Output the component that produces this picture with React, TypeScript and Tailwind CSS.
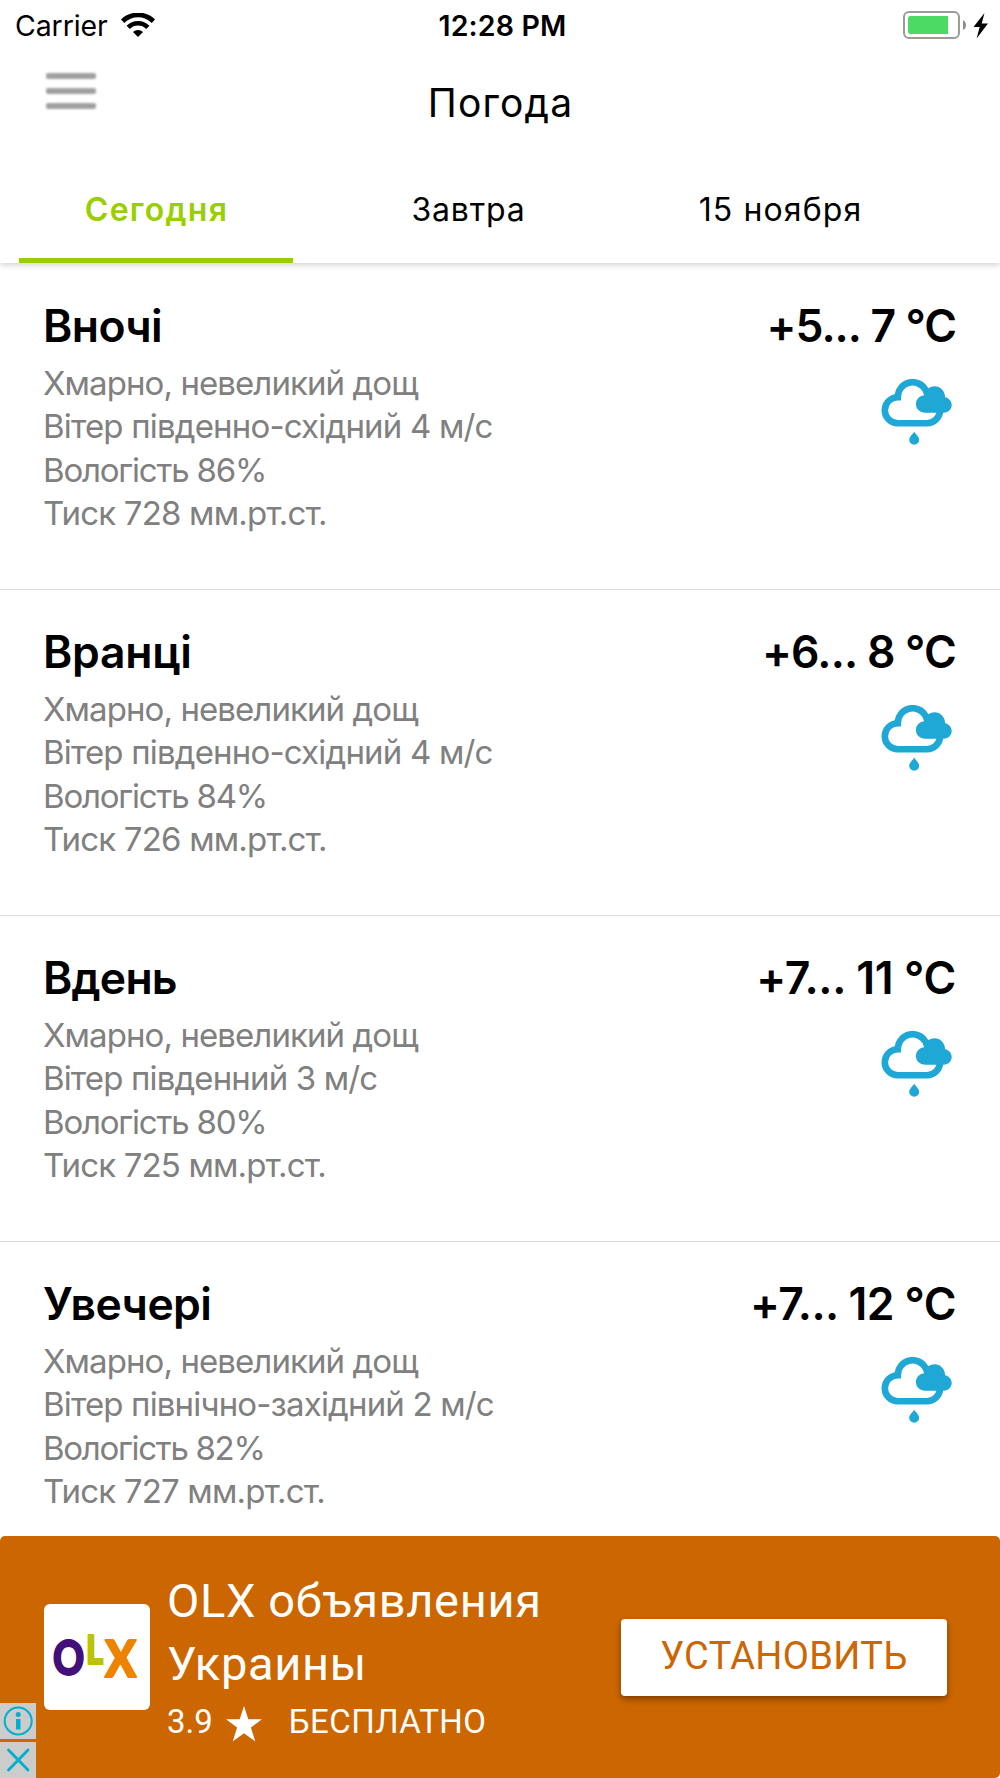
import clsx from 'clsx';

type Forecast = {
  title: string;
  temperature: string;
  tempClass: string;
  titleClass: string;
  lines: { text: string; className: string }[];
};

const tabs = [
  { label: 'Сегодня', active: true, className: 'font-semibold tracking-[1.3px]' },
  { label: 'Завтра', active: false, className: 'tracking-[0.85px]' },
  { label: '15 ноября', active: false, className: 'tracking-[1.1px]' },
];

const forecasts: Forecast[] = [
  {
    title: 'Вночі',
    titleClass: 'tracking-[-0.6px]',
    temperature: '+5... 7 °C',
    tempClass: 'tracking-[-0.95px]',
    lines: [
      { text: 'Хмарно, невеликий дощ', className: 'tracking-[-0.92px]' },
      { text: 'Вітер південно-східний 4 м/с', className: 'tracking-[-0.82px]' },
      { text: 'Вологість 86%', className: 'tracking-[-1.2px]' },
      { text: 'Тиск 728 мм.рт.ст.', className: 'tracking-[-0.82px]' },
    ],
  },
  {
    title: 'Вранці',
    titleClass: 'tracking-[-0.3px]',
    temperature: '+6... 8 °C',
    tempClass: 'tracking-[-0.8px]',
    lines: [
      { text: 'Хмарно, невеликий дощ', className: 'tracking-[-0.92px]' },
      { text: 'Вітер південно-східний 4 м/с', className: 'tracking-[-0.82px]' },
      { text: 'Вологість 84%', className: 'tracking-[-1.2px]' },
      { text: 'Тиск 726 мм.рт.ст.', className: 'tracking-[-0.82px]' },
    ],
  },
  {
    title: 'Вдень',
    titleClass: 'tracking-[-0.8px]',
    temperature: '+7... 11 °C',
    tempClass: 'tracking-[-0.3px]',
    lines: [
      { text: 'Хмарно, невеликий дощ', className: 'tracking-[-0.92px]' },
      { text: 'Вітер південний 3 м/с', className: 'tracking-[-0.86px]' },
      { text: 'Вологість 80%', className: 'tracking-[-1.2px]' },
      { text: 'Тиск 725 мм.рт.ст.', className: 'tracking-[-0.85px]' },
    ],
  },
  {
    title: 'Увечері',
    titleClass: 'tracking-[-0.6px]',
    temperature: '+7... 12 °C',
    tempClass: 'tracking-[-0.55px]',
    lines: [
      { text: 'Хмарно, невеликий дощ', className: 'tracking-[-0.92px]' },
      { text: 'Вітер північно-західний 2 м/с', className: 'tracking-[-0.84px]' },
      { text: 'Вологість 82%', className: 'tracking-[-1.3px]' },
      { text: 'Тиск 727 мм.рт.ст.', className: 'tracking-[-0.82px]' },
    ],
  },
];

function WifiIcon() {
  return (
    <svg className="h-6 w-[34px]" viewBox="0 0 34 24" fill="none" stroke="black">
      <path d="M1.6 8.2a22 22 0 0 1 30.8 0" strokeWidth="4.8" />
      <path d="M7.2 14.3a13.8 13.8 0 0 1 19.6 0" strokeWidth="4.6" />
      <path d="M12 18.9a7.2 7.2 0 0 1 10 0L17 24Z" fill="black" stroke="none" />
    </svg>
  );
}

function BatteryIcon() {
  return (
    <svg className="h-7 w-[86px]" viewBox="0 0 86 28">
      <rect x="1" y="1" width="55" height="26" rx="5" fill="white" stroke="#9b9b9b" strokeWidth="2" />
      <path d="M7.5 5H45v18H7.5a2.5 2.5 0 0 1-2.5-2.5v-13A2.5 2.5 0 0 1 7.5 5Z" fill="#4cd964" />
      <path d="M60 9.2c4 1.8 4 8 0 9.8Z" fill="#8c8c8c" />
      <path d="M81.5 2 70.5 16h6.2L73.6 27.5 85 12.6h-6.3Z" fill="black" />
    </svg>
  );
}

function RainCloudIcon() {
  return (
    <svg className="mr-1 h-[67px] w-[71px]" viewBox="21 19 71 67" fill="#1fa7d5">
      <path
        d="M80 50.2a13 13 0 0 1-13 13H37.8a13 13 0 0 1 0-26a14.8 14.8 0 0 1 27.600-7.600q1.800 3 2 7"
        fill="none"
        stroke="#1fa7d5"
        strokeWidth="6.600"
      />
      <path d="M64.800 52.700a8.700 8.700 0 0 1-.5-17.400c.6-5.200 4.900-9.100 10.200-9.100 5.900 0 10.600 4.700 10.600 11.100 3.800.7 6.600 3.800 6.600 7.700 0 4.400-3.500 7.700-7.900 7.700Z" />
      <path d="M54.200 71.500c1 2.500 5 5 5 8.300a5 5 0 0 1-10 0c0-3.300 4-5.800 5-8.300Z" />
    </svg>
  );
}

function StatusBar() {
  return (
    <div className="relative z-20 grid h-[50px] shrink-0 grid-cols-3 items-center bg-white text-[28.5px]">
      <div className="flex items-center gap-[13px] pl-[15px]">
        <span className="pt-0.5 tracking-[-0.1px]">Carrier</span>
        <WifiIcon />
      </div>
      <span className="pt-0.5 pl-[5px] text-center font-semibold tracking-[0.15px]">12:28 PM</span>
      <div className="flex justify-end pr-[11px]">
        <BatteryIcon />
      </div>
    </div>
  );
}

function ForecastRow({ forecast }: { forecast: Forecast }) {
  return (
    <div className="flex h-[326px] justify-between border-b border-[#dcdcdc] pt-[35px] pr-[44px] pl-[43px]">
      <div className="whitespace-nowrap">
        <h2 className={clsx('mb-[9px] text-[44.5px] leading-[54px] font-semibold', forecast.titleClass)}>
          {forecast.title}
        </h2>
        {forecast.lines.map((line) => (
          <p key={line.text} className={clsx('text-[33px] leading-[43.4px] text-[#808080]', line.className)}>
            {line.text}
          </p>
        ))}
      </div>
      <div className="flex flex-col items-end gap-[26px]">
        <span className={clsx('text-[44.5px] leading-[54px] font-semibold whitespace-nowrap', forecast.tempClass)}>
          {forecast.temperature}
        </span>
        <RainCloudIcon />
      </div>
    </div>
  );
}

function OlxLogo() {
  return (
    <svg
      className="h-full w-full"
      viewBox="0 0 106 106"
      fontFamily="Lato"
      fontWeight="900"
      strokeWidth="2"
      strokeLinejoin="round"
    >
      <text transform="translate(9 71) scale(0.8 1)" fontSize="48" fill="#430f78" stroke="#430f78">O</text>
      <text transform="translate(42 60) scale(0.84 1)" fontSize="39" fill="#bcc400" stroke="#bcc400">L</text>
      <text transform="translate(61 73) scale(0.9 1)" fontSize="51" fill="#ee8300" stroke="#ee8300">X</text>
    </svg>
  );
}

function AdBanner() {
  return (
    <div className="relative flex h-[242px] shrink-0 rounded-[5px] bg-[#cc6600] font-[Roboto,sans-serif] text-white">
      <div className="mt-[68px] ml-[44px] h-[106px] w-[106px] rounded-[6px] bg-white">
        <OlxLogo />
      </div>
      <div className="ml-[17px] pt-[33px]">
        <div className="text-[47px] leading-[63px] tracking-[0.65px] whitespace-nowrap">
          OLX объявления
          <br />
          Украины
        </div>
        <div className="mt-1 flex items-center text-[33px] leading-[46px]">
          <span>3.9</span>
          <svg className="mt-1 ml-[13px] h-9 w-9" viewBox="0 0 36 36" fill="white">
            <path d="m18 0 4.3 13.2H36l-11.1 8.3L29.3 35.5 18 27.2 6.7 35.5l4.4-14L0 13.2h13.7Z" />
          </svg>
          <span className="ml-[27px] tracking-[0.45px]">БЕСПЛАТНО</span>
        </div>
      </div>
      <button className="mt-[83px] mr-[53px] ml-auto h-[77px] w-[326px] rounded-[4px] bg-white pb-0.5 text-[38px] tracking-[0.35px] text-[#cc6600] shadow-[0_3px_6px_rgba(0,0,0,0.4)]">
        УСТАНОВИТЬ
      </button>
      <div className="absolute bottom-0 left-0 flex flex-col gap-[3px]">
        <svg className="h-9 w-9 bg-[#cccccc]" viewBox="0 0 36 36" fill="#00aecd">
          <circle cx="18.2" cy="18" r="13.5" fill="none" stroke="#00aecd" strokeWidth="2" />
          <circle cx="18.2" cy="11.5" r="2.5" />
          <path d="M16 16h4.5v10.5H16Z" />
        </svg>
        <svg className="h-9 w-9 bg-[#cccccc]" viewBox="0 0 36 36" stroke="#00aecd" strokeWidth="2.8" strokeLinecap="round">
          <path d="m8.5 8 19.5 20M28 8 8.5 28" />
        </svg>
      </div>
    </div>
  );
}

export default function App() {
  return (
    <div className="flex h-[1778px] w-[1000px] flex-col overflow-hidden bg-white font-[Inter,sans-serif] text-black">
      <StatusBar />
      <header className="relative z-10 shrink-0 bg-white shadow-[0_2px_6px_rgba(0,0,0,0.18)]">
        <div className="grid h-[105px] grid-cols-3 items-center">
          <div className="flex flex-col gap-[9px] self-start pt-[23px] pl-[46px]">
            <div className="h-[6px] w-[50px] rounded-[2px] bg-[#a0a0a0] blur-[1px]" />
            <div className="h-[6px] w-[50px] rounded-[2px] bg-[#a0a0a0] blur-[1px]" />
            <div className="h-[6px] w-[50px] rounded-[2px] bg-[#a0a0a0] blur-[1px]" />
          </div>
          <h1 className="pt-0.5 pl-px text-center text-[39px] tracking-[1.15px]">Погода</h1>
        </div>
        <nav className="flex h-[108px]">
          {tabs.map((tab) => (
            <div
              key={tab.label}
              className={clsx(
                'mx-[19px] flex w-[274px] items-center justify-center border-y-[5px] border-transparent pt-px pl-px text-[32px]',
                tab.active && 'border-b-[#99cf00] text-[#99cf00]',
                tab.className
              )}
            >
              {tab.label}
            </div>
          ))}
        </nav>
      </header>
      <main className="min-h-0 flex-1 overflow-hidden pt-px">
        {forecasts.map((forecast) => (
          <ForecastRow key={forecast.title} forecast={forecast} />
        ))}
      </main>
      <AdBanner />
    </div>
  );
}
